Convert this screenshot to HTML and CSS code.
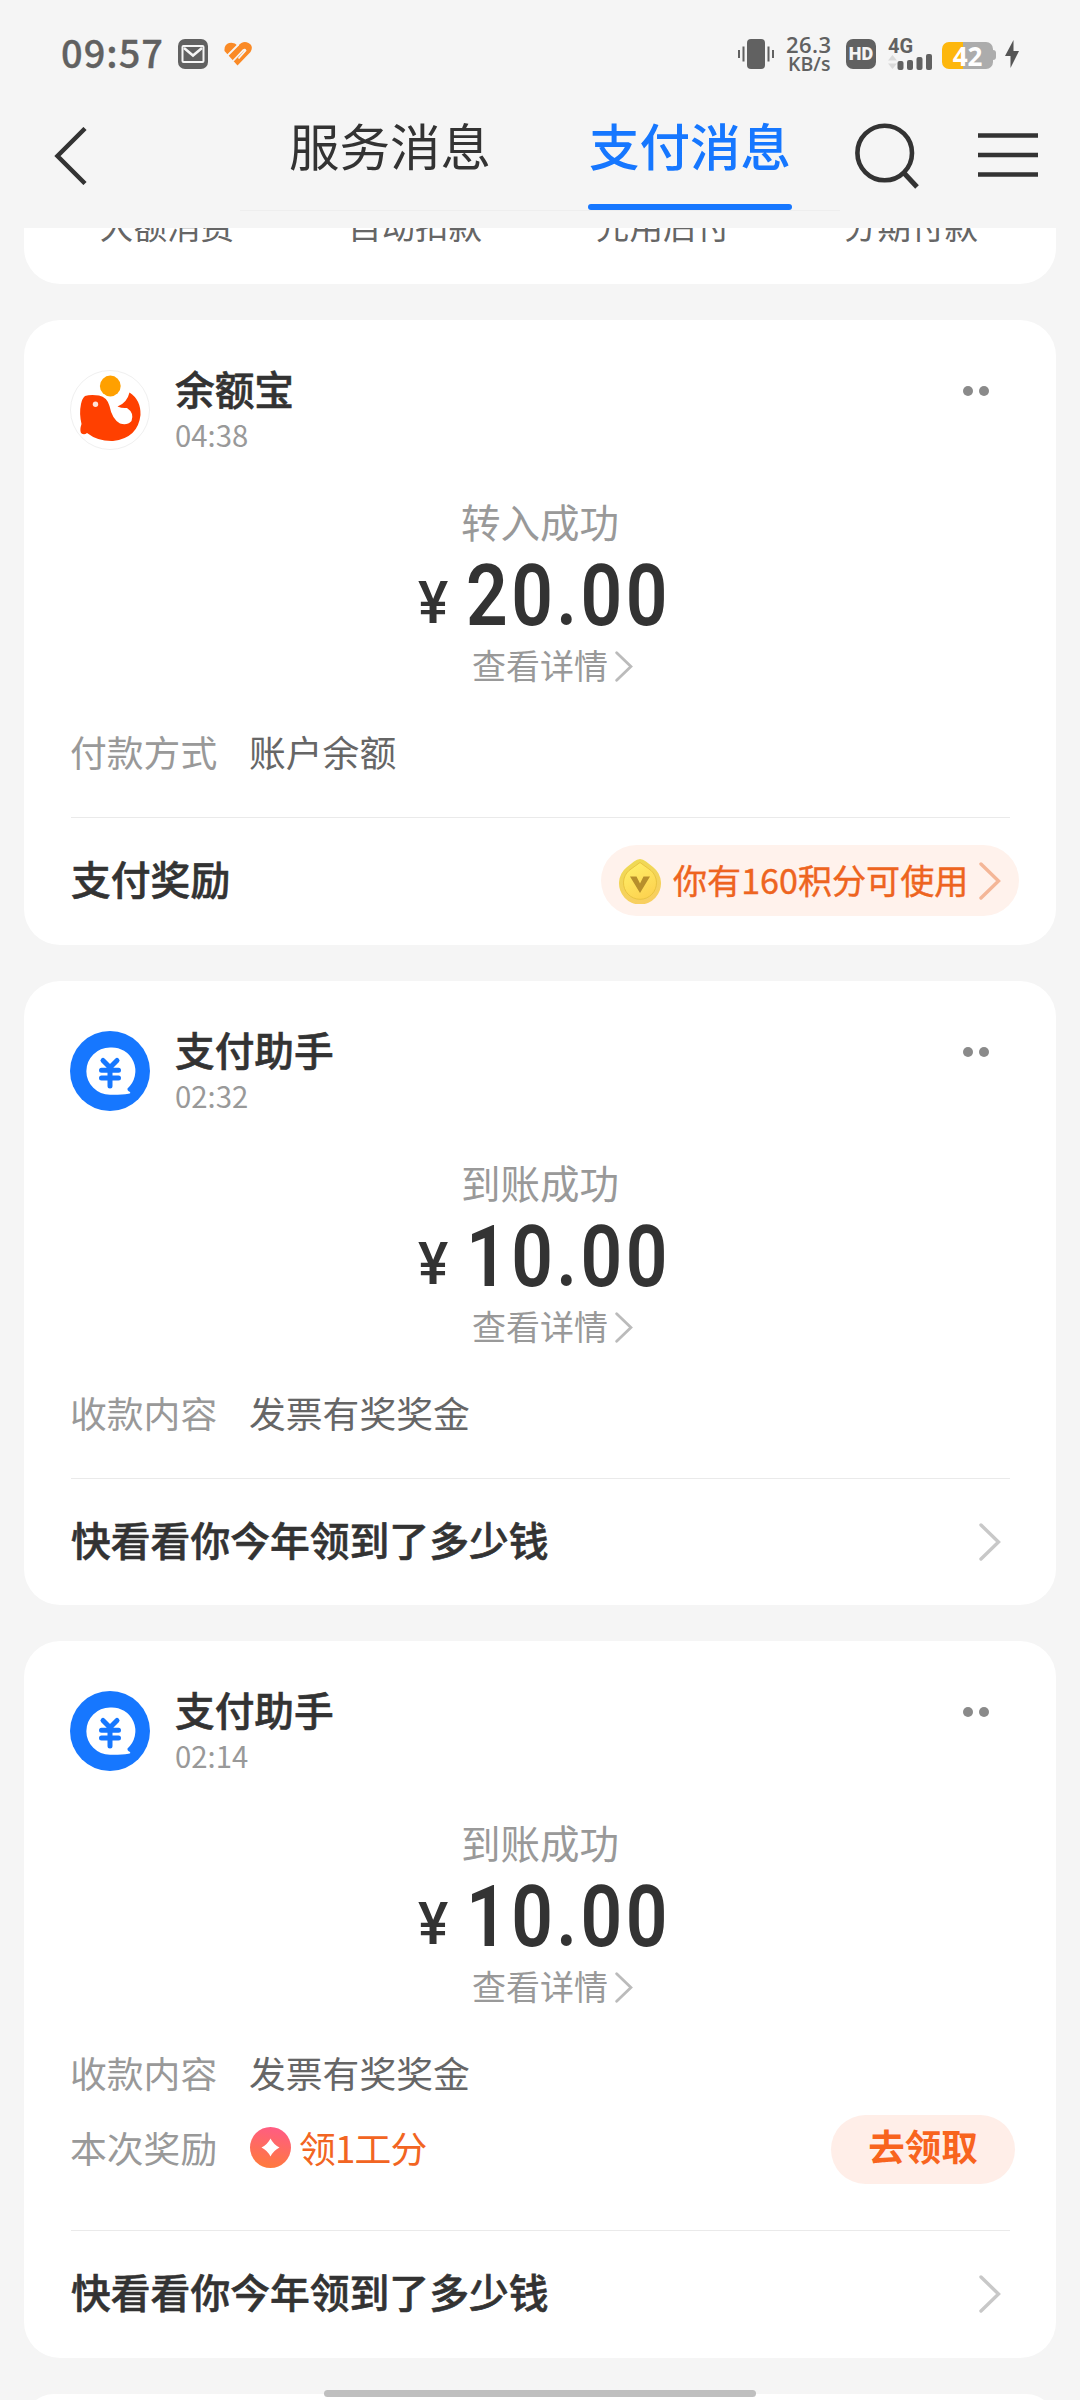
FILE: index.html
```html
<!DOCTYPE html>
<html lang="zh-CN">
<head>
<meta charset="utf-8">
<title>支付消息</title>
<link rel="stylesheet" href="styles.css">
</head>
<body>
<svg width="0" height="0" class="defs" aria-hidden="true">
  <symbol id="chevron" viewBox="0 0 22 38"><path d="M2 2 19.500 19 2 36" fill="none" stroke="currentColor" stroke-width="3.400" stroke-linecap="round"/></symbol>
  <symbol id="helper" viewBox="0 0 80 80">
    <circle cx="40" cy="40" r="40" fill="#1677ff"/>
    <path d="M40 16.500a23.500 23.500 0 0 1 17.500 41q-.5 2 2.500 3.500 1 1.500-1.500 1.800-7 1.200-18.500 1A23.600 23.600 0 0 1 40 16.500Z" fill="#fff"/>
    <path d="M33 29.500l7 7 7-7M40 37v18M31.500 39.300h17M31.500 47h17" fill="none" stroke="#1677ff" stroke-width="5" stroke-linecap="round"/>
  </symbol>
</svg>
<div class="screen">
  <header class="status">
    <span class="clock">09:57</span>
    <svg class="mail" width="30" height="30" viewBox="0 0 30 30"><rect width="30" height="30" rx="7" fill="#616161"/><rect x="4.500" y="7" width="21" height="16" rx="1" fill="none" stroke="#f5f5f5" stroke-width="2"/><path d="M6 9l9 7.500L24 9" fill="none" stroke="#f5f5f5" stroke-width="2.500"/></svg>
    <svg class="heart" width="28" height="24" viewBox="0 0 28 24"><path d="M14 4Q10-.5 5 1T.5 9L13.500 23.500 26.500 10Q30 4 24.500 1T14 4Z" fill="#fa8a26"/><path d="M3.500 13.500 14.500 2.500M9 19 19.500 8Q21 7 21.500 8.500L14.500 16.500" fill="none" stroke="#f5f5f5" stroke-width="1.800"/></svg>
    <svg class="vibrate" width="36" height="30" viewBox="0 0 36 30"><rect x="9" width="18" height="30" rx="4" fill="#616161"/><path d="M1 11v8M5.500 7.500v15M30.500 7.500v15M35 11v8" stroke="#616161" stroke-width="2"/></svg>
    <div class="speed"><span>26.3</span><span class="unit">KB/s</span></div>
    <div class="hd">HD</div>
    <div class="signal"><span class="net">4G</span>
      <svg width="44" height="17" viewBox="0 0 44 17"><path d="M0 7.500 4.500 2 9 7.500ZM0 10.500h9L4.500 16Z" fill="#dadada"/><g fill="#616161"><rect x="9.500" y="8" width="6" height="9" rx="2"/><rect x="19" y="7" width="6" height="10" rx="2"/><rect x="28.500" y="4" width="6" height="13" rx="2"/><rect x="38" y="1" width="6" height="16" rx="2"/></g></svg>
    </div>
    <div class="battery"><span class="cell">42</span><span class="nub"></span></div>
    <svg class="bolt" width="14" height="28" viewBox="0 0 14 28"><path d="M8.500 0 0 16h5.500V28L14 11H8.500Z" fill="#555"/></svg>
  </header>

  <nav class="nav">
    <svg class="back" width="34" height="58" viewBox="0 0 34 58"><path d="M31 1.500 3.500 29 31 56.500" fill="none" stroke="#333" stroke-width="4.500"/></svg>
    <div class="tabs">
      <span class="tab">服务消息</span>
      <span class="tab active">支付消息</span>
    </div>
    <svg class="search" width="66" height="68" viewBox="0 0 66 68"><circle cx="30.700" cy="30" r="27.300" fill="none" stroke="#333" stroke-width="4.600"/><path d="M50 50 63 64" stroke="#333" stroke-width="5"/></svg>
    <svg class="menu" width="60" height="44" viewBox="0 0 60 44"><path d="M0 2.500h60M0 22h60M0 41.500h60" stroke="#333" stroke-width="4.500"/></svg>
  </nav>

  <main class="feed">
    <section class="shortcuts">
      <span>大额消费</span><span>自动扣款</span><span>先用后付</span><span>分期付款</span>
    </section>

    <article class="card">
      <div class="head">
        <svg class="avatar" viewBox="0 0 80 80"><circle cx="40" cy="40" r="39.500" fill="#fff" stroke="#f0f0f0"/><circle cx="40.300" cy="16" r="10.400" fill="#ffa000"/><path d="M15 26Q20 24.500 29 25.500 37 27 39.500 36 42 49 50 53.500 57 56 61.500 51 64.500 43 57 38Q52 38.500 47.500 36.500 57 33 59.500 22.500 71 30 70.500 45 68 68 43 71 28 71.500 17 63 14 65.500 11 63 9.500 60 11.500 54 9 43 11 34 12 28.500 15 26Z" fill="#ff4000"/><circle cx="25.500" cy="34.300" r="2.700" fill="#ffe4da"/></svg>
        <div class="who"><h2>余额宝</h2><time>04:38</time></div>
        <span class="more"><i></i><i></i></span>
      </div>
      <div class="summary">
        <div class="result">转入成功</div>
        <div class="amount"><span class="yen">¥</span><span class="num">20.00</span></div>
        <div class="detail">查看详情<svg><use href="#chevron"/></svg></div>
      </div>
      <div class="row"><span class="label">付款方式</span><span class="value">账户余额</span></div>
      <div class="foot">
        <b>支付奖励</b>
        <div class="points">
          <svg class="coin" width="42" height="46" viewBox="0 0 42 46"><defs><linearGradient id="gold" x1="0" y1="0" x2="0.300" y2="1"><stop offset="0" stop-color="#eddb52"/><stop offset="1" stop-color="#f8cf60"/></linearGradient><linearGradient id="face" x1="0" y1="0" x2="0.500" y2="1"><stop offset="0" stop-color="#fff26a"/><stop offset="1" stop-color="#fdd451"/></linearGradient></defs><path d="M15 3.500Q21-1.500 27 3.500L34 9A21 21 0 1 1 8 9Z" fill="url(#gold)"/><path d="M21 4.500 32 12.500A16.500 16.500 0 1 1 10 12.500Z" fill="url(#face)" stroke="#eac440"/><path d="M11 18.500h6.500l3.500 7 3.500-7H31L21 35Z" fill="#b78f2c"/></svg>
          <span>你有160积分可使用</span>
          <svg class="arrow"><use href="#chevron"/></svg>
        </div>
      </div>
    </article>

    <article class="card short">
      <div class="head">
        <svg class="avatar"><use href="#helper"/></svg>
        <div class="who"><h2>支付助手</h2><time>02:32</time></div>
        <span class="more"><i></i><i></i></span>
      </div>
      <div class="summary">
        <div class="result">到账成功</div>
        <div class="amount"><span class="yen">¥</span><span class="num">10.00</span></div>
        <div class="detail">查看详情<svg><use href="#chevron"/></svg></div>
      </div>
      <div class="row"><span class="label">收款内容</span><span class="value">发票有奖奖金</span></div>
      <div class="foot"><b>快看看你今年领到了多少钱</b><svg class="arrow"><use href="#chevron"/></svg></div>
    </article>

    <article class="card">
      <div class="head">
        <svg class="avatar"><use href="#helper"/></svg>
        <div class="who"><h2>支付助手</h2><time>02:14</time></div>
        <span class="more"><i></i><i></i></span>
      </div>
      <div class="summary">
        <div class="result">到账成功</div>
        <div class="amount"><span class="yen">¥</span><span class="num">10.00</span></div>
        <div class="detail">查看详情<svg><use href="#chevron"/></svg></div>
      </div>
      <div class="row"><span class="label">收款内容</span><span class="value">发票有奖奖金</span></div>
      <div class="row reward">
        <span class="label">本次奖励</span>
        <svg class="token" width="41" height="41" viewBox="0 0 41 41"><defs><linearGradient id="coral" x1="0.600" y1="0" x2="0.400" y2="1"><stop offset="0" stop-color="#ff5c84"/><stop offset="1" stop-color="#ff7a3c"/></linearGradient></defs><circle cx="20.500" cy="20.500" r="20.500" fill="url(#coral)"/><path d="M20.500 11.500Q23.500 17.500 29.500 20.500 23.500 23.500 20.500 29.500 17.500 23.500 11.500 20.500 17.500 17.500 20.500 11.500Z" fill="#fff"/></svg>
        <span class="value gain">领1工分</span>
        <button class="claim">去领取</button>
      </div>
      <div class="foot"><b>快看看你今年领到了多少钱</b><svg class="arrow"><use href="#chevron"/></svg></div>
    </article>

    <article class="card next"></article>
  </main>
  <div class="homebar"></div>
</div>
</body>
</html>
```
FILE: styles.css
```css
* { box-sizing: border-box; }
body { margin: 0; background: #f5f5f5; font-family: "Noto Sans CJK SC", sans-serif; color: #333; }
svg { display: block; flex: none; }
.defs { position: absolute; }
.screen { position: relative; width: 1080px; height: 2400px; overflow: hidden; }

.status { display: flex; align-items: center; height: 108px; padding: 0 61px 0 61px; color: #616161; }
.clock { width: 117px; font-size: 38px; font-weight: 500; line-height: 44px; letter-spacing: 1px; padding-bottom: 4px; -webkit-text-stroke: .3px currentColor; }
.heart { margin-left: 16px; }
.vibrate { margin-left: auto; }
.speed { display: flex; flex-direction: column; width: 47px; margin-left: 12px; font: 600 22px/19.500px "Open Sans", sans-serif; letter-spacing: .4px; }
.speed .unit { font-size: 19.500px; padding-left: 2px; letter-spacing: 0; }
.hd { width: 30px; height: 30px; margin-left: 13px; border-radius: 7px; background: #616161; color: #f5f5f5; font: 900 18px/30px Roboto, sans-serif; text-align: center; }
.signal { width: 44px; margin-left: 12px; }
.net { display: block; height: 15px; font: 700 20px/17px Roboto, sans-serif; }
.battery { display: flex; align-items: center; margin-left: 10px; padding-top: 2px; }
.cell { width: 51px; height: 27px; border-radius: 7px; background: linear-gradient(90deg, #fdb70d 42%, #acacac 42%); color: #fff; font: 700 26px/28px "Open Sans", sans-serif; text-align: center; }
.nub { width: 3px; height: 10px; border-radius: 0 3px 3px 0; background: #acacac; }
.bolt { margin-left: 9px; }

.nav { display: flex; align-items: flex-start; height: 120px; padding: 0 42px 0 54px; }
.back { margin-top: 19px; }
.tabs { display: flex; justify-content: space-between; width: 600px; height: 103px; margin-left: 152px; padding: 0 48px; border-bottom: 1px solid #eee; }
.tab { width: 204px; height: 102px; font-size: 50.500px; line-height: 72px; text-align: center; }
.tab.active { color: #1677ff; font-weight: 500; }
.tab.active::after { content: ""; display: block; height: 6px; margin-top: 24px; border-radius: 3px; background: #1677ff; }
.search { margin: 15px 0 0 14px; }
.menu { margin: 25px 0 0 auto; }

.feed { display: flex; flex-direction: column; gap: 36px; padding: 0 24px; }
.shortcuts { display: grid; grid-template-columns: repeat(4, 248px); height: 56px; padding: 0 19px; overflow: hidden; background: #fff; border-radius: 0 0 36px 36px; color: #666; font-size: 33.600px; line-height: 40px; text-align: center; }
.shortcuts span { margin-top: -23px; }

.card { padding: 46px 46px 2px; background: #fff; border-radius: 36px; }
.card.short { padding-bottom: 1px; }
.head { display: flex; height: 84px; }
.avatar { width: 80px; height: 80px; margin-top: 4px; }
.who { margin-left: 25px; }
h2 { margin: 0 0 9px; font-size: 39.700px; font-weight: 500; line-height: 44px; -webkit-text-stroke: .6px currentColor; }
time { display: block; color: #999; font-size: 29.300px; line-height: 30px; }
.more { display: flex; gap: 6px; margin: 20px 21px 0 auto; }
.more i { width: 10px; height: 10px; border-radius: 50%; background: #8a8a8a; }
.summary { display: flex; flex-direction: column; align-items: center; margin-top: 49px; }
.result { color: #999; font-size: 39.500px; line-height: 44px; }
.amount { display: flex; align-items: baseline; width: 246px; height: 80px; margin-top: 13px; font-family: Roboto, sans-serif; line-height: 80px; }
.yen { flex: none; width: 49px; font-size: 60px; font-weight: 500; transform: translate(1px, -2px) scaleX(.95); transform-origin: left; }
.num { flex: none; font-size: 86px; font-weight: 600; letter-spacing: 4px; transform: scaleX(.85); transform-origin: left; }
.detail { display: flex; align-items: center; gap: 7px; margin: 9px 0 0 25px; color: #999; font-size: 34px; line-height: 40px; }
.detail svg { width: 18px; height: 31px; margin-top: 3px; color: #bbb; }
.row { display: flex; margin-top: 44px; font-size: 36.800px; line-height: 44px; }
.label { width: 180px; color: #999; }
.value { color: #666; }
.row:not(.reward) .value { margin-left: -1px; }
.row.reward { align-items: center; height: 69px; margin-top: 21px; margin-right: -5px; }
.reward .label, .reward .value { padding-bottom: 5px; }
.token { margin-bottom: 4px; }
.reward .gain { margin-left: 8px; color: #f26522; letter-spacing: -.8px; }
.claim { width: 184px; height: 69px; margin-left: auto; padding: 0 0 8px; border: 0; border-radius: 35px; background: #ffeee8; color: #f8641e; font: 700 36.500px/60px "Noto Sans CJK SC", sans-serif; }
.foot { display: flex; align-items: center; justify-content: space-between; height: 126px; margin-top: 44px; margin-left: 1px; border-top: 1px solid #eaeaea; }
.reward + .foot { margin-top: 46px; }
.foot b { font-size: 39.800px; font-weight: 500; line-height: 44px; padding-bottom: 5px; -webkit-text-stroke: .6px currentColor; }
.arrow { width: 22px; height: 38px; margin-right: 9px; color: #c8c8c8; }
.points { display: flex; align-items: center; width: 418px; height: 71px; margin-right: -9px; padding: 0 18px; border-radius: 36px; background: #fff2ec; color: #ee6420; font-size: 34.100px; line-height: 40px; }
.points span { margin-left: 12px; padding-bottom: 3px; white-space: nowrap; -webkit-text-stroke: .4px currentColor; }
.points .arrow { margin: 0 0 0 auto; color: #f4b697; }
.card.next { height: 60px; }
.homebar { position: absolute; left: 324px; top: 2390px; width: 432px; height: 7px; border-radius: 4px; background: #bfbfbf; }
```
